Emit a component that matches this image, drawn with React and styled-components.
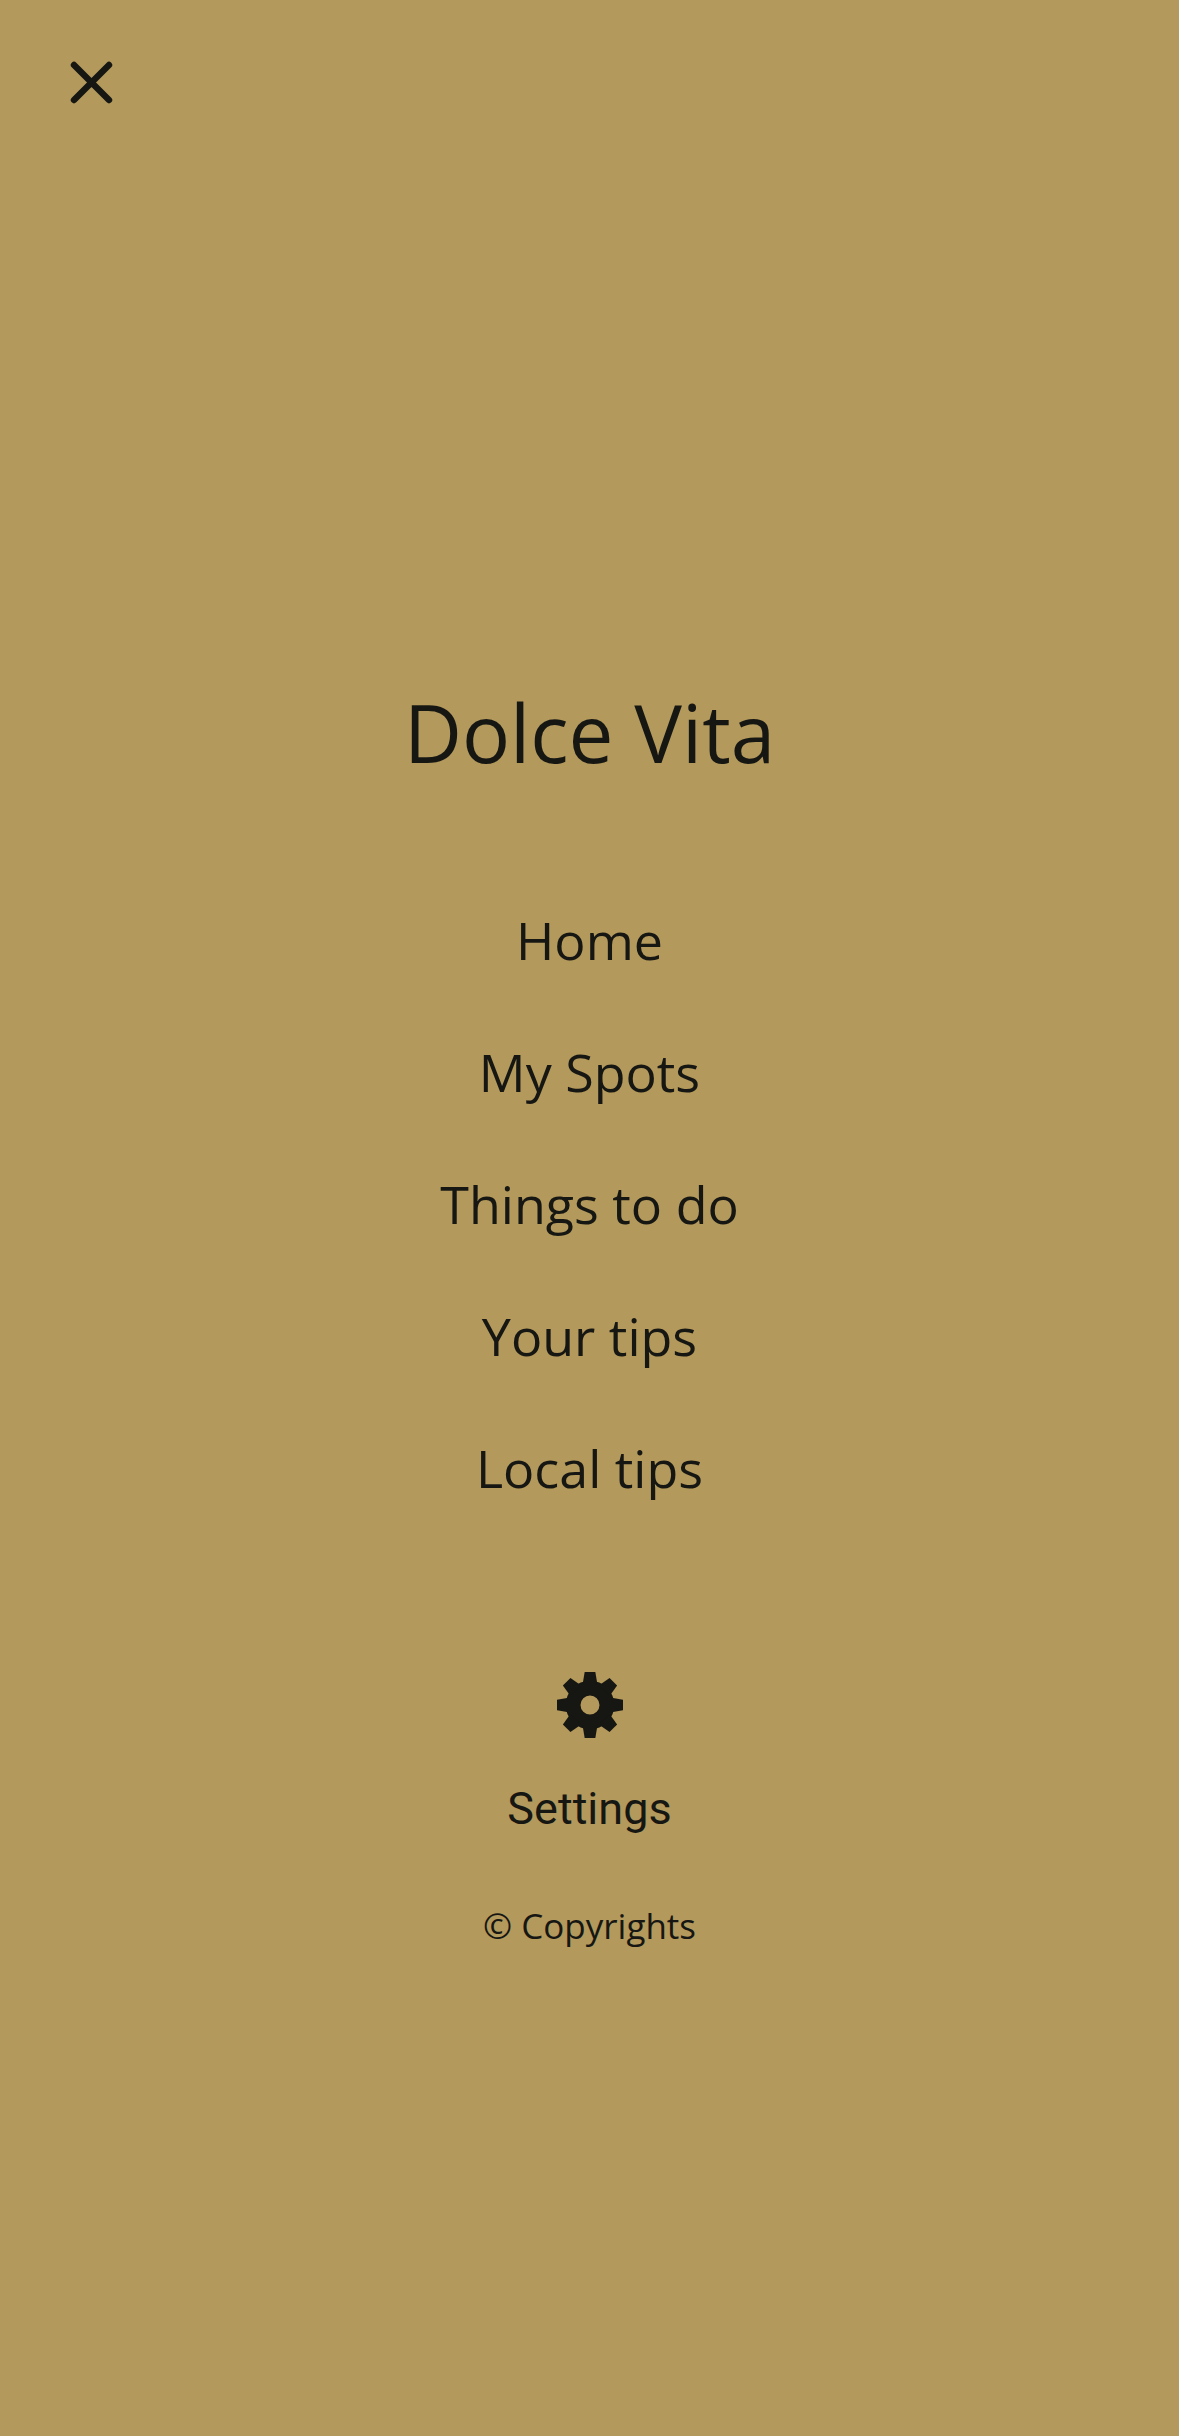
import React from "react";
import styled, { createGlobalStyle } from "styled-components";

const ink = "#161613";
const gold = "#b3995b";

const GlobalStyle = createGlobalStyle`
  *, *::before, *::after { box-sizing: border-box; }
  body {
    margin: 0;
    background: ${gold};
    color: ${ink};
    font-family: "Open Sans", "Noto Sans", sans-serif;
  }
`;

const Screen = styled.div`
  display: flex;
  flex-direction: column;
  min-height: 100vh;
  background: ${gold};
`;

const TopBar = styled.header`
  display: flex;
  padding: 50px 60px 82px;
`;

const IconButton = styled.button`
  display: flex;
  align-items: center;
  justify-content: center;
  width: 64px;
  height: 64px;
  padding: 0;
  border: 0;
  background: transparent;
  color: inherit;
  cursor: pointer;
`;

const Menu = styled.main`
  flex: 1;
  display: flex;
  flex-direction: column;
  align-items: center;
  justify-content: center;
  text-align: center;
`;

const Title = styled.h1`
  margin: 0 0 128px;
  font-size: 80px;
  line-height: 100px;
  font-weight: 400;
`;

const NavList = styled.ul`
  display: flex;
  flex-direction: column;
  align-items: center;
  gap: 72px;
  margin: 0 0 174px;
  padding: 0;
  list-style: none;
`;

const NavLink = styled.a`
  display: block;
  color: inherit;
  font-size: 52px;
  line-height: 60px;
  text-decoration: none;
`;

const SettingsButton = styled.button`
  display: flex;
  flex-direction: column;
  align-items: center;
  gap: 44px;
  margin: 0 0 66px;
  padding: 0;
  border: 0;
  background: transparent;
  color: inherit;
  font-family: Roboto, sans-serif;
  font-size: 45px;
  line-height: 54px;
  cursor: pointer;
`;

const Copyright = styled.a`
  color: inherit;
  font-size: 35px;
  line-height: 48px;
  text-decoration: none;
`;

const links = ["Home", "My Spots", "Things to do", "Your tips", "Local tips"];
const toothAngles = [0, 45, 90, 135, 180, 225, 270, 315];

function CloseIcon() {
  return (
    <svg width="48" height="48" viewBox="0 0 48 48" aria-hidden="true">
      <path
        d="M6 7L41 42M41 7L6 42"
        fill="none"
        stroke="currentColor"
        strokeWidth="6.4"
        strokeLinecap="round"
      />
    </svg>
  );
}

function GearIcon() {
  return (
    <svg width="66" height="66" viewBox="-99 -99 198 198" fill="currentColor" aria-hidden="true">
      <path
        fillRule="evenodd"
        d="M0-73A73 73 0 1 1 0 73A73 73 0 1 1 0-73ZM0-28.5A28.5 28.5 0 1 0 0 28.5A28.5 28.5 0 1 0 0-28.5Z"
      />
      {toothAngles.map((angle) => (
        <path key={angle} transform={`rotate(${angle})`} d="M-16-99H16L21-69L16-60H-16L-21-69Z" />
      ))}
    </svg>
  );
}

export default function App() {
  return (
    <>
      <GlobalStyle />
      <Screen>
        <TopBar>
          <IconButton type="button" aria-label="Close menu">
            <CloseIcon />
          </IconButton>
        </TopBar>
        <Menu>
          <Title>Dolce Vita</Title>
          <nav>
            <NavList>
              {links.map((label) => (
                <li key={label}>
                  <NavLink href="#">{label}</NavLink>
                </li>
              ))}
            </NavList>
          </nav>
          <SettingsButton type="button">
            <GearIcon />
            Settings
          </SettingsButton>
          <Copyright href="#">© Copyrights</Copyright>
        </Menu>
      </Screen>
    </>
  );
}
